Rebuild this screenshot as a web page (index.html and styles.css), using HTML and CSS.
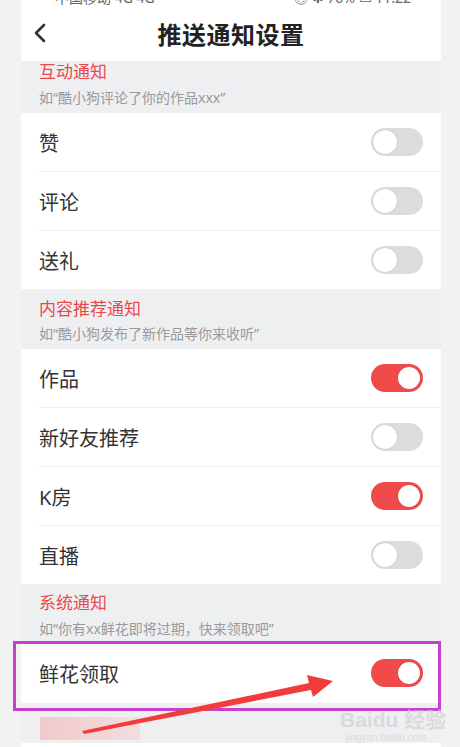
FILE: index.html
```html
<!DOCTYPE html>
<html>
  <head>
    <meta charset="utf-8">
    <title>推送通知设置</title>
    <link rel="stylesheet" href="styles.css">
  </head>
  <body>
    <div class='phone'>
      <div class='topbar'>
        <div class='status'>
          <span>中国移动 4G 4G</span>
          <span>◎ ✱ 76% ▭ 11:22</span>
        </div>
        <div class='nav'>
          <svg class='back' width='14' height='20' viewBox='0 0 14 20'>
            <polyline points='11,2 3,10 11,18' fill='none' stroke='#333' stroke-width='2.6' stroke-linecap='round' stroke-linejoin='round'/>
          </svg>
          <div class='title'>推送通知设置</div>
        </div>
      </div>

      <div class='group-head first'>
        <div class='group-title'>互动通知</div>
        <div class='group-sub'>如“酷小狗评论了你的作品xxx”</div>
      </div>
      <div class='card'>
        <div class='row'><span>赞</span><span class='switch'></span></div>
        <div class='row'><span>评论</span><span class='switch'></span></div>
        <div class='row'><span>送礼</span><span class='switch'></span></div>
      </div>

      <div class='group-head second'>
        <div class='group-title'>内容推荐通知</div>
        <div class='group-sub'>如“酷小狗发布了新作品等你来收听”</div>
      </div>
      <div class='card'>
        <div class='row'><span>作品</span><span class='switch on'></span></div>
        <div class='row'><span>新好友推荐</span><span class='switch'></span></div>
        <div class='row'><span>K房</span><span class='switch on'></span></div>
        <div class='row'><span>直播</span><span class='switch'></span></div>
      </div>

      <div class='group-head third'>
        <div class='group-title'>系统通知</div>
        <div class='group-sub'>如“你有xx鲜花即将过期，快来领取吧”</div>
      </div>
      <div class='card'>
        <div class='row tall'><span>鲜花领取</span><span class='switch on'></span></div>
      </div>

      <div class='gap'><div class='blur'></div></div>
      <div class='card bottom'></div>
    </div>

    <!-- annotation drawn over the screenshot -->
    <div class='mark'></div>
    <svg class='arrow' width='460' height='747' viewBox='0 0 460 747'>
      <polygon points='82,731 309,683 307,675 333,681 313,697 311,690 84,734' fill='#f23c3c'/>
    </svg>
    <div class='watermark'>
      <div class='wm-big'>Bai<span class='paw'>du</span> 经验</div>
      <div class='wm-small'>jingyan.baidu.com</div>
    </div>
  </body>
</html>
```

FILE: styles.css
```css
body {
  margin: 0;
  background-color: #f2f2f2;
  font-family: 'Noto Sans', 'Noto Sans CJK SC', sans-serif;
}
.phone {
  width: 420px;
  height: 747px;
  margin-left: 21px;
  background-color: #eeeff1;
  overflow: hidden;
}
.topbar {
  background-color: #fff;
  height: 61px;
}
.status {
  height: 6px;
  overflow: hidden;
  display: flex;
  justify-content: space-between;
  padding: 0 30px 0 34px;
  font-size: 14px;
  line-height: 14px;
  color: #666;
}
.status span {
  margin-top: -9px;
}
.nav {
  height: 55px;
  display: flex;
  align-items: center;
  justify-content: center;
  position: relative;
}
.back {
  position: absolute;
  left: 12px;
  top: 17px;
}
.title {
  font-size: 24px;
  font-weight: bold;
  color: #222;
  letter-spacing: 0.5px;
}
.group-head {
  padding: 1px 18px 5px;
}
.group-head.second {
  padding-top: 10px;
}
.group-head.third {
  padding-top: 9px;
  padding-bottom: 4px;
}
.group-title {
  font-size: 17px;
  line-height: 20px;
  color: #e9494b;
}
.group-sub {
  margin-top: 6px;
  font-size: 14px;
  line-height: 20px;
  color: #9a9a9a;
}
.group-head.second .group-sub {
  margin-top: 5px;
}
.card {
  background-color: #fff;
}
.row {
  height: 58px;
  margin-left: 18px;
  padding-right: 18px;
  display: flex;
  align-items: center;
  justify-content: space-between;
  font-size: 20px;
  color: #333;
}
.row + .row {
  border-top: 1px solid #efefef;
}
.row.tall {
  height: 60px;
}
.switch {
  width: 52px;
  height: 28px;
  border-radius: 14px;
  background-color: #dcdcdc;
  position: relative;
  box-sizing: border-box;
}
.switch::after {
  content: '';
  position: absolute;
  top: 2px;
  left: 2px;
  width: 24px;
  height: 24px;
  border-radius: 50%;
  background-color: #fff;
  box-shadow: 0 0 1px rgba(0, 0, 0, 0.25);
}
.switch.on {
  background-color: #f04a4b;
}
.switch.on::after {
  left: auto;
  right: 3px;
  top: 3px;
  width: 22px;
  height: 22px;
}
.gap {
  height: 40px;
  padding: 14px 0 0 19px;
  box-sizing: border-box;
}
.blur {
  width: 100px;
  height: 23px;
  background: linear-gradient(90deg, #f1caca, #f3d6d6 60%, #f1dede);
}
.card.bottom {
  height: 20px;
}
.mark {
  position: absolute;
  left: 13px;
  top: 641px;
  width: 422px;
  height: 64px;
  border: 3px solid #c83fd0;
}
.arrow {
  position: absolute;
  left: 0;
  top: 0;
}
.watermark {
  position: absolute;
  left: 340px;
  top: 708px;
  color: rgba(205, 205, 208, 0.6);
  font-family: 'Liberation Sans', 'Noto Sans CJK SC', sans-serif;
}
.wm-big {
  font-size: 21px;
  font-weight: bold;
  line-height: 24px;
}
.wm-small {
  font-size: 10px;
  line-height: 12px;
  padding-left: 6px;
}
```
